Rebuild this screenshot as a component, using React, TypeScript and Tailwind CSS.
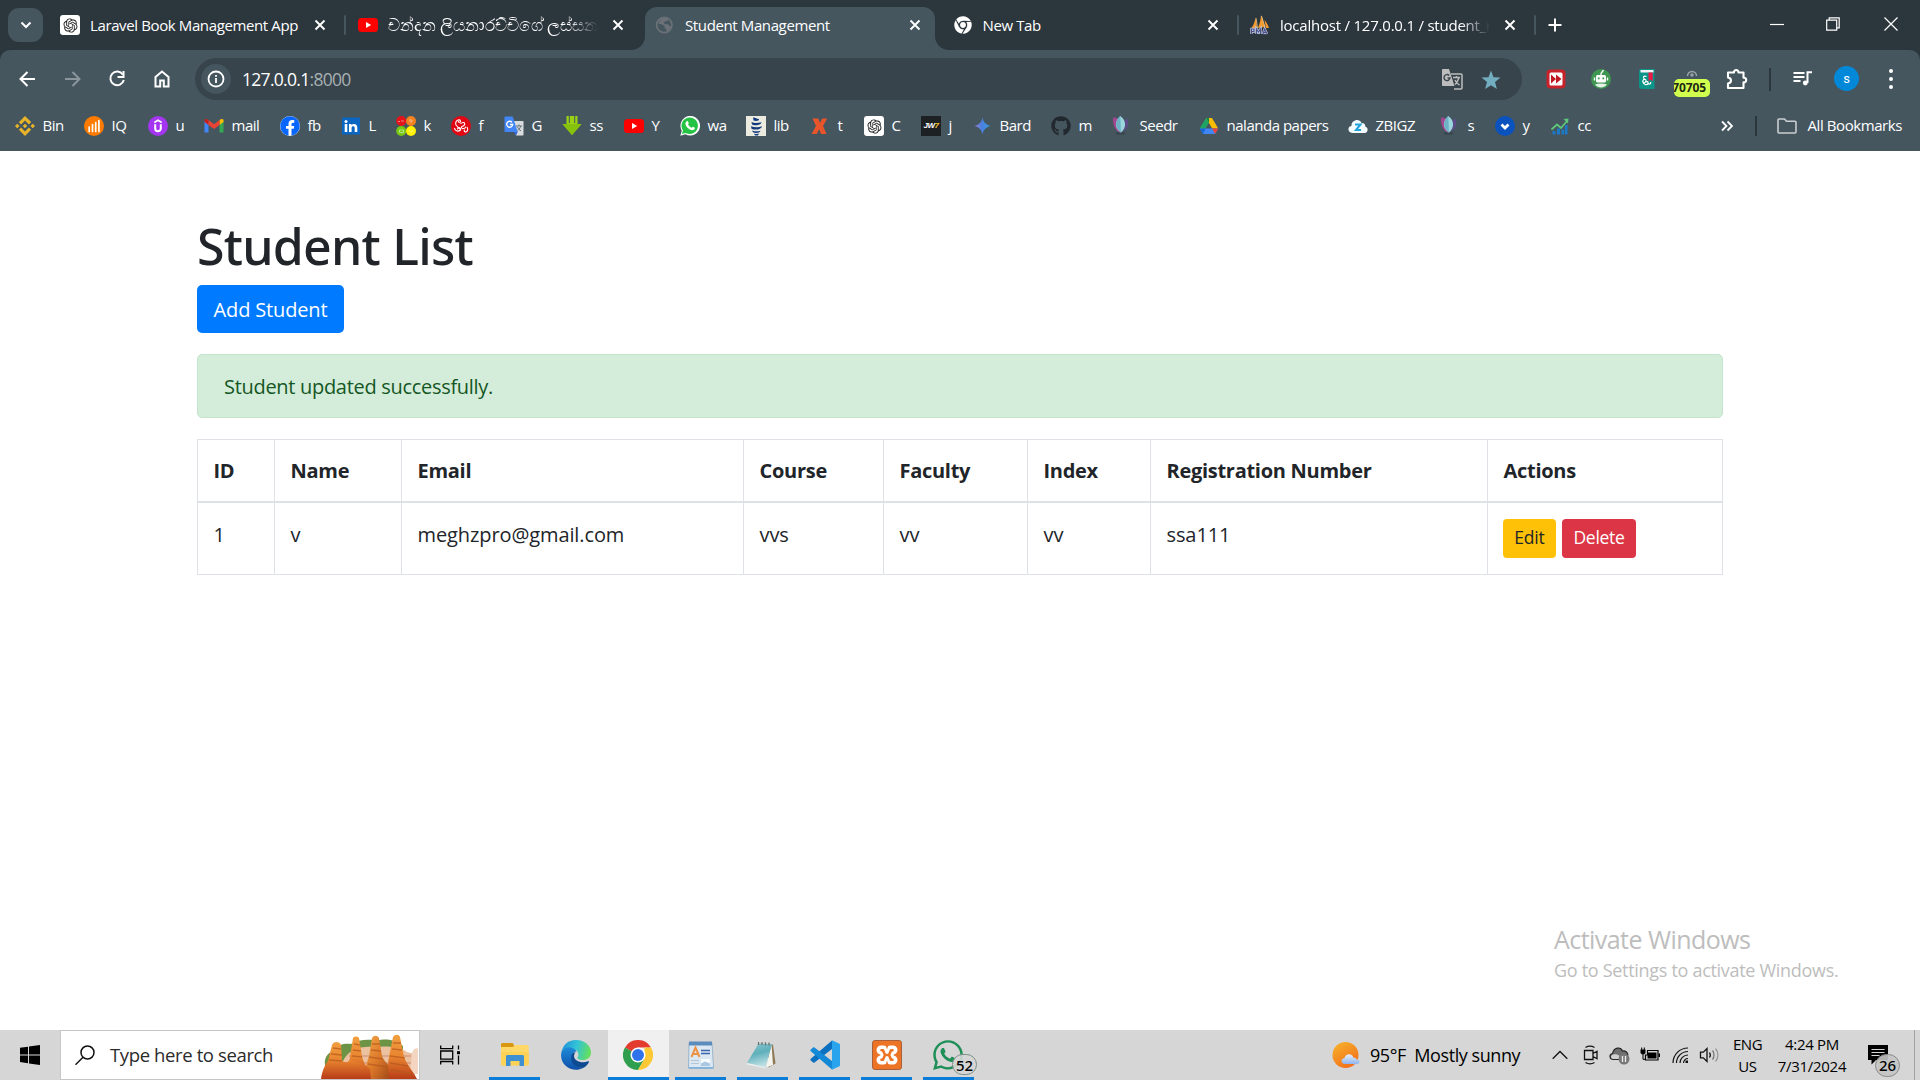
import React from "react";
import { FaGithub, FaWhatsapp, FaFacebook, FaChrome } from "react-icons/fa";
import { RiOpenaiFill } from "react-icons/ri";
import { SiBinance } from "react-icons/si";

/* ---------- small drawings ---------- */

const Close = () => (
  <svg viewBox="0 0 12 12" className="size-3 shrink-0 stroke-white" fill="none" strokeWidth="1.9">
    <path d="M1.5 1.5l9 9M10.5 1.5l-9 9" />
  </svg>
);

const OpenAi = () => (
  <span className="flex size-5 shrink-0 items-center justify-center rounded-[3px] bg-white text-[#222]">
    <RiOpenaiFill size={17} />
  </span>
);

const YouTube = () => (
  <svg viewBox="0 0 20 20" className="size-5 shrink-0">
    <rect x="0" y="3" width="20" height="14" rx="3.5" fill="#f00" />
    <path d="M8 7l5.2 3L8 13z" fill="#fff" />
  </svg>
);

const Globe = () => (
  <svg viewBox="0 0 20 20" className="size-5 shrink-0">
    <circle cx="9.3" cy="10" r="7.7" fill="none" stroke="#6b7176" strokeWidth="1.7" />
    <path d="M9 2.500c2 0 4 .8 4.600 2l-1.500 1.500-2 .3-1.200 1.700 1 1.200h3.200l1.300 1.600 1.800.2c-.5 3-2.500 5-4.700 6l.1-2.500-2-1.600V11L6.500 9.200 3.500 8.700C4 5 6 3 9 2.500z" fill="#6b7176" />
  </svg>
);

const Sails = () => (
  <svg viewBox="0 0 20 20" className="size-5 shrink-0">
    <path d="M1.500 13C4 9 5 6 5.500 2.500L7 13zM8 13C10 8 10.800 4 11 0l4 12zM14.500 5c2 2 3.500 5 4.500 8h-3z" fill="#f29a2e" />
    <path d="M6 3l1.500 10M11.500 1l3.500 11" stroke="#ffd08a" strokeWidth=".8" />
    <path d="M1.500 19v-5h2.500v2.500H1.500M6.500 19v-5l2 3 2-3v5M13 19l1.700-5L17 19M13.500 17.500h3" stroke="#c3cbe6" strokeWidth="2.400" fill="none" />
    <path d="M1.500 19v-5h2.500v2.500H1.500M6.500 19v-5l2 3 2-3v5M13 19l1.700-5L17 19M13.500 17.500h3" stroke="#4a5187" strokeWidth="1.100" fill="none" />
  </svg>
);

const Seedr = () => (
  <svg viewBox="0 0 20 20" className="size-5 shrink-0">
    <ellipse cx="8.500" cy="17.300" rx="5" ry="1.500" fill="#394750" />
    <path d="M1 1.500C5 1 9 4 9 9v8C2.500 15 .5 8 1 1.500z" fill="#a0478f" />
    <path d="M15.500 2.500c2 6 0 12-7 13.500V7z" fill="#5c4a86" />
    <path d="M8.300 0c5.700 4 6.700 11 .7 16.500C2 12 2.500 5 8.300 0z" fill="#9ad6dc" />
    <path d="M8.300 0c-5.500 5-6 12 .7 16.500z" fill="#6fb2c5" />
  </svg>
);

const Udemy = () => (
  <svg viewBox="0 0 20 20" className="size-5 shrink-0">
    <circle cx="10" cy="10" r="10" fill="#a435f0" />
    <path d="M6.300 6.500L10 4.300l3.700 2.200" stroke="#fff" strokeWidth="1.600" fill="none" />
    <path d="M7.200 8.300v4.200c0 3.700 5.600 3.700 5.600 0V8.300" stroke="#fff" strokeWidth="2" fill="none" />
  </svg>
);

const Gmail = () => (
  <svg viewBox="0 0 20 20" className="size-5 shrink-0">
    <path d="M.5 4.500v12h4V8z" fill="#4285f4" />
    <path d="M19.500 4.500v12h-4V8z" fill="#34a853" />
    <path d="M15.500 4v5l4-3V4.500c0-1.800-2.200-2-4-.5z" fill="#fbbc04" />
    <path d="M.5 6l4 3V4C2.700 2.500.5 2.700.5 4.500z" fill="#c5221f" />
    <path d="M4.500 4v5L10 13l5.500-4V4L10 8.200z" fill="#ea4335" />
  </svg>
);

const LinkedIn = () => (
  <svg viewBox="0 0 20 20" className="size-5 shrink-0">
    <rect x="1" y="1.500" width="18" height="17" rx="1.200" fill="#0a66c2" />
    <circle cx="5" cy="5.500" r="1.500" fill="#fff" />
    <path d="M3.700 8h2.600v8H3.700zM8 8h2.500v1.200c1.200-2 5.800-2 5.800 2.200V16h-2.600v-4c0-2.500-3.100-2.300-3.100 0v4H8z" fill="#fff" />
  </svg>
);

const FourDots = () => (
  <svg viewBox="0 0 20 20" className="size-5 shrink-0">
    <circle cx="5.200" cy="5" r="5" fill="#e5141a" />
    <circle cx="15" cy="5" r="5" fill="#f58220" />
    <circle cx="5.200" cy="15" r="5" fill="#76c810" />
    <circle cx="15" cy="15" r="5" fill="#fff200" />
    <path d="M2 5.500h2M5 5h3M13 4.500c1-1 3-1 3 .5s-2 1.500-2 .3M3.500 14h4v2.500h-4zM13 14c2 3 4 2 4 0" stroke="#fff" strokeOpacity=".6" strokeWidth=".8" fill="none" />
  </svg>
);

const Sinhala = () => (
  <svg viewBox="0 0 20 20" className="size-5 shrink-0">
    <circle cx="10" cy="10" r="10" fill="#e30613" />
    <path d="M5 9c-1.500-5 4-6.500 4.500-4 .3 1.900-2.700 1.500-2-.2M3.500 12c.5 4 6.500 4 6 .7-.5-2.200-3.700-1.200-2.700.7M5 9l5 5.500M9.500 8c2-2.500 5-1.500 4 .7s-3.500 1.200-3 3 4 .8 4.500-1M16 11c1 1.500 1 4-.7 4.700s-2.800-1-1.600-2" stroke="#fff" strokeWidth="1.100" fill="none" />
  </svg>
);

const GTranslate = () => (
  <svg viewBox="0 0 20 20" className="size-5 shrink-0">
    <path d="M8 5h10.500c.8 0 1 .4 1 1v12.500c0 .8-.3 1-1 1H12z" fill="#d9dcdf" />
    <path d="M12 10h6M15 8.500V10M16.700 10c-.6 2.500-2 4-3.500 5M13.500 11c.7 2 2 3 3.500 3.800" stroke="#66737b" strokeWidth="1" fill="none" />
    <path d="M1.500.5h7.200l5 15.500H1.500C.8 16 .5 15.600.5 15V1.500c0-.7.3-1 1-1z" fill="#4285f4" />
    <path d="M12 19.500l1.700-3.500H10z" fill="#3367d6" />
    <path d="M8 6.300a3 3 0 1 0 .7 2.200H6" stroke="#fff" strokeWidth="1.300" fill="none" />
  </svg>
);

const GreenArrow = () => (
  <svg viewBox="0 0 20 20" className="size-5 shrink-0">
    <path d="M4.500 0h2.300v7h1V0h4.400v7h1V0h2.300v8h4L10 19 .5 8h4z" fill="#9ad315" />
    <path d="M.5 8h19L10 19z" fill="#86c10c" />
  </svg>
);

const WhatsBookmark = () => (
  <svg viewBox="0 0 20 20" className="size-5 shrink-0">
    <path d="M.3 19.700l1.500-5A9.800 9.800 0 1 1 5.500 18.300z" fill="#fff" />
    <path d="M1.900 18.100l1.100-3.700A8.200 8.200 0 1 1 5.800 16.900z" fill="#25c343" />
    <path d="M6.800 5.200c.8-.4 1.200-.1 1.900 1.900.2.500-.8 1.200-.6 1.500.9 1.600 2 2.500 3.400 3.100.5.200.9-1.200 1.400-1 2 .9 2.200 1 2 1.600-.5 2-2.700 2.400-5 1.300C7.300 12.200 5.300 9.600 5.400 7.600c.1-1 .7-2 1.400-2.400z" fill="#fff" />
  </svg>
);

const Lib = () => (
  <svg viewBox="0 0 20 20" className="size-5 shrink-0">
    <rect width="20" height="20" fill="#ecebdf" />
    <path d="M7 1.500c2.500-.5 3 1.500 6 1.500.5 2-3 2.500-5.500 1.500zM5.500 6c3 1.500 6 1 10 .2-.5 3.300-7 3.600-9.500 2.300zM5 10.200c4 1.500 8 1.300 11 0-.5 3.800-8 4-10.500 2.500zM6 14.500c3 1.200 6 1 8.500.3-.5 2.500-5.500 2.700-7.500 1.500zM8 17.500c2 .8 4 .5 5 0l-1 2H9z" fill="#123a80" />
  </svg>
);

const RedX = () => (
  <svg viewBox="0 0 20 20" className="size-5 shrink-0">
    <path d="M2.500 2.500h5.800l1.700 4.500 2.200-4.500h5L13 10l3.500 8h-5.500l-1.700-4.700L6.700 18H1.500L6 10z" fill="#e8552b" />
  </svg>
);

const Jw = () => (
  <span className="flex size-5 shrink-0 items-center justify-center bg-[#1e2124] font-['Liberation_Sans'] text-[8px] font-bold italic tracking-[-0.5px] text-white">
    JW<span className="text-[#f3c326]">7</span>
  </span>
);

const Spark = () => (
  <svg viewBox="0 0 20 20" className="size-5 shrink-0">
    <defs>
      <linearGradient id="spark" x1="0" x2="1">
        <stop offset="0" stopColor="#9a7fd0" />
        <stop offset=".45" stopColor="#4a7fe0" />
        <stop offset="1" stopColor="#3a9fe0" />
      </linearGradient>
    </defs>
    <path d="M10.500 1.500c1 4.800 3.200 7.300 8 8.500-4.800 1.200-7 3.700-8 8.500-1-4.800-3.200-7.300-8-8.500 4.800-1.200 7-3.700 8-8.500z" fill="url(#spark)" />
  </svg>
);

const Drive = () => (
  <svg viewBox="0 0 20 20" className="size-5 shrink-0">
    <path d="M7 2h6l-6 9.500L4 17 .8 12z" fill="#1fa463" />
    <path d="M7 2h6l6.200 10.500h-6z" fill="#fbbc04" />
    <path d="M7 2h3l0 5.200z" fill="#0f8a4c" />
    <path d="M6.700 12.500h12.500L16 18H4L.8 12.500z" fill="#4285f4" />
    <path d="M.8 12.500h6L4 18z" fill="#1967d2" />
    <path d="M13.200 12.500h6L16 18z" fill="#ea4335" />
  </svg>
);

const Zbigz = () => (
  <svg viewBox="0 0 20 20" className="size-5 shrink-0">
    <path d="M4.500 17C-1 17-.5 10 3.500 10 3 4.500 11 1.500 13.500 7c3-.3 4 1.800 3.700 3.500C20.500 11 20.500 17 16.500 17z" fill="#f4fbff" />
    <path d="M7 8.500h5.500L8 14h5" stroke="#23a3dd" strokeWidth="2" fill="none" />
  </svg>
);

const BlueY = () => (
  <svg viewBox="0 0 20 20" className="size-5 shrink-0">
    <circle cx="10" cy="10" r="10" fill="#0a52bd" />
    <path d="M6.500 8.500L10 12l3.500-3.500" stroke="#fff" strokeWidth="2.800" fill="none" />
  </svg>
);

const ChartUp = () => (
  <svg viewBox="0 0 20 20" className="size-5 shrink-0">
    <path d="M2.500 15h3v3.500h-3zM7 12.500h3v6H7zM11.500 13.500h2.800v5h-2.800zM15 9h2.500v9.500H15z" fill="#1e78c8" />
    <path d="M1.500 13.500l5.500-5 4 3.500 6-7" stroke="#5fc77c" strokeWidth="1.700" fill="none" />
    <path d="M13.500 3l5-.5-.5 5z" fill="#5fc77c" />
  </svg>
);

const Iq = () => (
  <svg viewBox="0 0 20 20" className="size-5 shrink-0">
    <circle cx="10" cy="10" r="10" fill="#ff7a00" />
    <path d="M5.200 11v4.500M8.500 8.500v7M11.700 6.500v9M14.900 4.500v11" stroke="#fff" strokeWidth="1.700" strokeLinecap="round" />
  </svg>
);

/* ---------- tab strip ---------- */

type TabProps = { icon: React.ReactNode; title: string; active?: boolean; fade?: boolean; sep?: boolean; font?: string };

function Tab({ icon, title, active, fade, sep, font = "text-[15px] tracking-[-0.38px]" }: TabProps) {
  return (
    <div className="relative flex h-[43px] w-[297.5px] shrink-0">
      <div className={"flex h-full w-[290px] items-center rounded-t-[12px] pb-[7px] pl-[10px] " + (active ? "bg-[#45565f]" : "")}>
        {icon}
        <span className={"ml-[10px] w-[210px] overflow-hidden whitespace-nowrap leading-[26px] text-white " + font + (fade ? " [mask-image:linear-gradient(to_right,#000_86%,transparent)]" : "")}>
          {title}
        </span>
        <span className="ml-[14px] flex">
          <Close />
        </span>
      </div>
      {sep && <span className="ml-[4px] mt-2 h-5 w-[2px] rounded bg-[#45565f]" />}
      {active && (
        <>
          <span className="absolute -left-[14px] bottom-0 size-[14px] bg-[#45565f]">
            <span className="block size-full rounded-br-[14px] bg-[#2c363d]" />
          </span>
          <span className="absolute bottom-0 left-[290px] size-[14px] bg-[#45565f]">
            <span className="block size-full rounded-bl-[14px] bg-[#2c363d]" />
          </span>
        </>
      )}
    </div>
  );
}

function TabStrip() {
  return (
    <div className="flex h-[50px] bg-[#2c363d] pl-2 pt-[7px]">
      <div className="mr-[7px] mt-px flex h-[34px] w-[35px] items-center justify-center rounded-[11px] bg-[#45565f]">
        <svg viewBox="0 0 12 12" className="size-3" fill="none" stroke="#fff" strokeWidth="2">
          <path d="M1.500 3.500L6 8l4.500-4.500" />
        </svg>
      </div>
      <Tab icon={<OpenAi />} title="Laravel Book Management App" sep />
      <Tab icon={<YouTube />} title="චන්දන ලියනාරච්චිගේ ලස්සන" fade font="text-[17.2px]" />
      <Tab icon={<Globe />} title="Student Management" active />
      <Tab icon={<span className="flex size-5 shrink-0 items-center justify-center text-white"><FaChrome size={18} /></span>} title="New Tab" sep />
      <Tab icon={<Sails />} title="localhost / 127.0.0.1 / student_m" fade sep font="text-[15px] tracking-[-0.22px]" />
      <svg viewBox="0 0 14 14" className="ml-[10px] mt-[11px] size-[14px]" stroke="#fff" strokeWidth="2">
        <path d="M7 .5v13M.5 7h13" />
      </svg>
      <div className="ml-auto flex h-[34px] items-center pr-[22px]">
        <svg viewBox="0 0 14 14" className="mr-[42px] size-[14px]" stroke="#fff" strokeWidth="1.200">
          <path d="M0 7.500h14" />
        </svg>
        <svg viewBox="0 0 14 14" className="mr-[44px] size-[14px]" fill="none" stroke="#fff" strokeWidth="1.200">
          <path d="M.7 3.200h10v10h-10zM3.200 3V.8h10v10H11" />
        </svg>
        <svg viewBox="0 0 14 14" className="size-[14px]" stroke="#fff" strokeWidth="1.200">
          <path d="M.5.5l13 13M13.500.5l-13 13" />
        </svg>
      </div>
    </div>
  );
}

/* ---------- toolbar ---------- */

const navIcon = "size-5 shrink-0";

function Toolbar() {
  return (
    <div className="flex h-[58px] items-center pl-[17px]">
      <svg viewBox="0 0 20 20" className={navIcon} fill="none" stroke="#fff" strokeWidth="2">
        <path d="M18 10H4M10.500 3L3.500 10l7 7" />
      </svg>
      <svg viewBox="0 0 20 20" className={"ml-[26px] " + navIcon} fill="none" stroke="#8b969c" strokeWidth="2">
        <path d="M2 10h14M9.500 3l7 7-7 7" />
      </svg>
      <svg viewBox="0 0 20 20" className={"ml-[24px] " + navIcon} fill="none" stroke="#fff" strokeWidth="2">
        <path d="M15.800 5.500A6.800 6.800 0 1 0 16.800 11" />
        <path d="M16.500 2v6h-6" />
      </svg>
      <svg viewBox="0 0 20 20" className={"ml-[25px] " + navIcon} fill="none" stroke="#fff" strokeWidth="2">
        <path d="M3.500 17.500V8L10 2.500 16.500 8v9.500h-4.700v-6H8.200v6z" />
      </svg>
      <div className="ml-[23px] flex h-[42px] w-[1327px] shrink-0 items-center rounded-full bg-[#38444b] pl-[6px] pr-[20px]">
        <div className="flex size-[30px] items-center justify-center rounded-full bg-[#45565f]">
          <svg viewBox="0 0 18 18" className="size-[18px]" fill="none" stroke="#fff" strokeWidth="1.800">
            <circle cx="9" cy="9" r="7.500" />
            <path d="M9 8v5M9 5v1.800" />
          </svg>
        </div>
        <span className="ml-[11px] text-[17.5px] tracking-[-0.7px] text-white">
          127.0.0.1<span className="text-[#a7b0b4]">:8000</span>
        </span>
        <svg viewBox="0 0 22 22" className="ml-auto size-[22px]" fill="none">
          <path d="M10 6h10c.8 0 1 .4 1 1v13c0 .8-.3 1-1 1h-7" stroke="#bdbdbd" strokeWidth="1.500" />
          <path d="M2 1h6l5.500 17H2c-.8 0-1-.4-1-1V2c0-.7.3-1 1-1z" fill="#bdbdbd" />
          <path d="M12 9.500h7M15.500 8v1.500M18 9.500c-1 3.500-2.500 5.500-4 7M14 12c1 2.500 2.500 4 4.500 5" stroke="#bdbdbd" strokeWidth="1.400" />
          <path d="M8.200 7.500a3 3 0 1 0 .8 2.500H6.500" stroke="#38444b" strokeWidth="1.400" />
        </svg>
        <svg viewBox="0 0 20 20" className="ml-[18px] mr-px mt-[2px] size-5">
          <path d="M10 .5l2.500 6.800 7 .3-5.500 4.500 1.900 7L10 15.200l-5.900 3.900 1.900-7L.5 7.600l7-.3z" fill="#73aec0" />
        </svg>
      </div>
      <svg viewBox="0 0 20 20" className="ml-[24px] size-5 shrink-0">
        <rect x=".5" y=".5" width="19" height="19" rx="4" fill="#c8232a" />
        <rect x="3.500" y="3.500" width="13" height="13" rx="1.500" fill="#fff" />
        <path d="M5 5.500l5 4.500-5 4.500zM10 5.500l5.500 4.500-5.500 4.500z" fill="#c01820" />
      </svg>
      <svg viewBox="0 0 20 20" className="ml-[25px] size-5 shrink-0">
        <circle cx="10" cy="10" r="10" fill="#3f9650" />
        <path d="M10 7V4.500L12.500 1" stroke="#fff" strokeWidth="1.300" fill="none" />
        <rect x="5" y="6" width="10" height="7.500" rx="1.500" fill="#fff" />
        <path d="M3.500 8.500v3M16.500 8.500v3" stroke="#fff" strokeWidth="1.400" />
        <path d="M4 15.500c4-1.500 8-1.500 12 0-3 4-9 4-12 0z" fill="#e4f3e6" />
        <rect x="6.800" y="8.500" width="1.800" height="1.800" fill="#3f9650" />
        <rect x="11.400" y="8.500" width="1.800" height="1.800" fill="#3f9650" />
      </svg>
      <svg viewBox="0 0 20 20" className="ml-[26px] size-5 shrink-0">
        <path d="M3 0h14.500v20H5a3 3 0 0 1-3-3V2z" fill="#0b9488" />
        <path d="M3.500 1h13v2.500h-13z" fill="#f3f3f3" />
        <path d="M11.500 3.500h4.200v9l-2.100-2-2.100 2z" fill="#f01846" />
        <path d="M9.500 7.500c-3-1.500-4 1.500-2 2.300M6 13c-1-3 3-3.500 3-1.500s-2.500 3.500-3 1.500c.5 3 4.500 3.500 5 1.500s-1-2.500-1.500-1.300M11 14c.5 2 3.500 1 2.500-1" stroke="#fff" strokeWidth="1.200" fill="none" />
      </svg>
      <div className="relative ml-[17px] h-[36px] w-9 shrink-0">
        <svg viewBox="0 0 20 20" className="absolute left-[8px] top-[7px] size-5" fill="none" stroke="#9ba4a8" strokeWidth="1.500">
          <path d="M5.500 8a4.500 4.500 0 0 1 9 0" />
          <circle cx="10" cy="7" r="1" />
        </svg>
        <span className="absolute left-0 top-[18px] flex h-[18px] w-9 items-center justify-end overflow-hidden rounded-[5px] bg-[#d2ff4d] pr-[4px] font-['Noto_Sans'] text-[12px] font-bold leading-[18px] tracking-[-0.1px] text-[#1d2612]">
          70705
        </span>
      </div>
      <svg viewBox="0 0 22 22" className="ml-[16px] size-[22px] shrink-0" fill="none" stroke="#fff" strokeWidth="2.100">
        <path d="M2 4.500h6c-.6-3.300 5-3.300 4.400 0H17.500v5.300c3.600-.6 3.600 5.200 0 4.600V20H2v-4.500c4-.6 4-5.400 0-6z" strokeLinejoin="round" />
      </svg>
      <span className="ml-[21px] h-[23px] w-[2px] shrink-0 bg-[#2c363d]" />
      <svg viewBox="0 0 22 20" className="ml-[21px] h-5 w-[22px] shrink-0" fill="none" stroke="#fff" strokeWidth="2">
        <path d="M1.500 4h11M1.500 8h11M1.500 12h7M15.500 14V3.200H20" />
        <circle cx="13.300" cy="14" r="2.400" fill="#fff" stroke="none" />
      </svg>
      <span className="-mt-px ml-[20px] flex size-[25px] shrink-0 items-center justify-center rounded-full bg-[#0288d8] font-['Roboto'] text-[13px] leading-5 text-white">s</span>
      <span className="ml-[30px] flex w-[4px] shrink-0 flex-col gap-[4px]">
        <span className="size-[4px] rounded-full bg-white" />
        <span className="size-[4px] rounded-full bg-white" />
        <span className="size-[4px] rounded-full bg-white" />
      </span>
    </div>
  );
}

/* ---------- bookmarks ---------- */

const bookmarks: { icon: React.ReactNode; label: string; w: string }[] = [
  { icon: <SiBinance size={20} color="#e9b429" />, label: "Bin", w: "w-[69px]" },
  { icon: <Iq />, label: "IQ", w: "w-[64px]" },
  { icon: <Udemy />, label: "u", w: "w-[56px]" },
  { icon: <Gmail />, label: "mail", w: "w-[76px]" },
  { icon: <span className="flex size-5 items-center justify-center rounded-full bg-white text-[#0866ff]"><FaFacebook size={20} /></span>, label: "fb", w: "w-[61px]" },
  { icon: <LinkedIn />, label: "L", w: "w-[55px]" },
  { icon: <FourDots />, label: "k", w: "w-[55px]" },
  { icon: <Sinhala />, label: "f", w: "w-[53px]" },
  { icon: <GTranslate />, label: "G", w: "w-[58px]" },
  { icon: <GreenArrow />, label: "ss", w: "w-[62px]" },
  { icon: <YouTube />, label: "Y", w: "w-[56px]" },
  { icon: <WhatsBookmark />, label: "wa", w: "w-[66px]" },
  { icon: <Lib />, label: "lib", w: "w-[64px]" },
  { icon: <RedX />, label: "t", w: "w-[54px]" },
  { icon: <OpenAi />, label: "C", w: "w-[57px]" },
  { icon: <Jw />, label: "j", w: "w-[51px]" },
  { icon: <Spark />, label: "Bard", w: "w-[79px]" },
  { icon: <FaGithub size={20} color="#22292e" />, label: "m", w: "w-[61px]" },
  { icon: <Seedr />, label: "Seedr", w: "w-[87px]" },
  { icon: <Drive />, label: "nalanda papers", w: "w-[149px]" },
  { icon: <Zbigz />, label: "ZBIGZ", w: "w-[92px]" },
  { icon: <Seedr />, label: "s", w: "w-[55px]" },
  { icon: <BlueY />, label: "y", w: "w-[55px]" },
  { icon: <ChartUp />, label: "cc", w: "w-[60px]" },
];

function BookmarkBar() {
  return (
    <div className="flex h-[43px] items-center pb-[7px] pl-[15px] pr-[18px] text-[15px] leading-5 tracking-[-0.48px] text-white">
      {bookmarks.map((b) => (
        <div key={b.label + b.w} className={"flex shrink-0 items-center gap-[7.5px] whitespace-nowrap " + b.w}>
          <span className="flex size-5 shrink-0">{b.icon}</span>
          <span className="-mt-[2px]">{b.label}</span>
        </div>
      ))}
      <svg viewBox="0 0 12 12" className="ml-auto size-3" fill="none" stroke="#fff" strokeWidth="1.800">
        <path d="M1 1.500L5.500 6 1 10.500M6.500 1.500L11 6l-4.500 4.500" />
      </svg>
      <span className="ml-[22px] h-5 w-[2px] bg-[#2c363d]" />
      <svg viewBox="0 0 20 16" className="ml-[20px] h-4 w-5" fill="none" stroke="#c9ced1" strokeWidth="1.600" strokeLinejoin="round">
        <path d="M1 14V2c0-.6.4-1 1-1h5.500l2 2.300H18c.6 0 1 .4 1 1V14c0 .6-.4 1-1 1H2c-.6 0-1-.4-1-1z" />
      </svg>
      <span className="-mt-[2px] ml-[11px] whitespace-nowrap tracking-[-0.42px]">All Bookmarks</span>
    </div>
  );
}

/* ---------- page ---------- */

const columns: { name: string; value: string; w: string }[] = [
  { name: "ID", value: "1", w: "w-[77px]" },
  { name: "Name", value: "v", w: "w-[127px]" },
  { name: "Email", value: "meghzpro@gmail.com", w: "w-[342px]" },
  { name: "Course", value: "vvs", w: "w-[140px]" },
  { name: "Faculty", value: "vv", w: "w-[144px]" },
  { name: "Index", value: "vv", w: "w-[123px]" },
  { name: "Registration Number", value: "ssa111", w: "w-[337px]" },
];

function Page() {
  return (
    <main className="relative h-[879px] bg-white pl-[197px] pt-[65px] text-[20px] leading-[30px] text-[#212529]">
      <h1 className="h-[69px] font-['Noto_Sans'] text-[50px] font-medium leading-[60px] tracking-[-0.75px]">Student List</h1>
      <button className="block h-[48px] w-[147px] rounded-[5px] bg-[#007bff] pt-px text-center tracking-[-0.15px] text-white">Add Student</button>
      <div className="mt-[21px] flex h-[64px] w-[1526px] items-center rounded-[5px] border border-[#c3e6cb] bg-[#d4edda] pl-[26px] pt-px tracking-[-0.3px] text-[#155724]">
        Student updated successfully.
      </div>
      <table className="mt-[21px] w-[1526px] table-fixed border-separate border-spacing-0 border-r border-[#dee2e6] text-left">
        <thead>
          <tr className="h-[64px]">
            {columns.map((c) => (
              <th key={c.name} className={"border-b-2 border-l border-t border-[#dee2e6] pl-[15.5px] align-middle font-bold tracking-[-0.28px] " + c.w}>
                {c.name}
              </th>
            ))}
            <th className="border-b-2 border-l border-t border-[#dee2e6] pl-[15.5px] align-middle font-bold tracking-[-0.28px]">Actions</th>
          </tr>
        </thead>
        <tbody>
          <tr className="h-[72px]">
            {columns.map((c) => (
              <td key={c.name} className="border-b border-l border-[#dee2e6] pl-[15.5px] pt-[17px] align-top tracking-[-0.1px]">
                {c.value}
              </td>
            ))}
            <td className="border-b border-l border-[#dee2e6] pl-[15px] pt-[16px] align-top">
              <div className="flex gap-[6px] text-[17.5px] leading-[37px]">
                <button className="h-[39px] w-[53px] rounded-[4px] bg-[#ffc107] pb-[2px] tracking-[-0.2px]">Edit</button>
                <button className="h-[39px] w-[74px] rounded-[4px] bg-[#dc3545] pb-[2px] tracking-[-0.3px] text-white">Delete</button>
              </div>
            </td>
          </tr>
        </tbody>
      </table>
      <div className="absolute left-[1554px] top-[771px] whitespace-nowrap text-[#bdbdbd]">
        <p className="text-[25px] leading-[35px] tracking-[-0.55px]">Activate Windows</p>
        <p className="text-[18px] leading-[26px] tracking-[-0.3px]">Go to Settings to activate Windows.</p>
      </div>
    </main>
  );
}

/* ---------- taskbar ---------- */

const Rocks = () => (
  <svg viewBox="0 0 100 48" className="h-12 w-[100px] shrink-0">
    <defs>
      <linearGradient id="rockA" x1="0" y1="0" x2="0" y2="1">
        <stop offset="0" stopColor="#f2a040" />
        <stop offset=".5" stopColor="#e8842f" />
        <stop offset="1" stopColor="#b83c18" />
      </linearGradient>
      <linearGradient id="rockB" x1="0" y1="0" x2="1" y2="1">
        <stop offset="0" stopColor="#f3a848" />
        <stop offset=".5" stopColor="#dd7a2a" />
        <stop offset="1" stopColor="#9c4416" />
      </linearGradient>
    </defs>
    <path d="M6 34c-1-6 2-12 8-14 6-7 12-8 18-7 8-5 20-5 26-3 8-3 20-1 26 5v30H6z" fill="#6d9345" />
    <path d="M24 30c6-12 18-15 30-14 12-1 26-1 34 5l8 2v22H10z" fill="#ecc1a0" />
    <path d="M22 32h76M30 25h62" stroke="#dba58a" strokeWidth="2" />
    <path d="M93 22l2-4 4-1v26h-8z" fill="#f4d5c2" />
    <path d="M26 48c2-8 4-14 5-22l3-19c1-2 5-2 6 0l3 18c2 10 8 14 9 23z" fill="url(#rockA)" />
    <path d="M46 48c-1-10 2-16 4-23l3-18c2-3 5-3 7 0l3 18c2 6 7 8 8 12l2 11z" fill="url(#rockB)" />
    <path d="M70 48c0-8-2-14 0-22l4-20c2-3 6-3 7 0l4 20c3 8 9 14 13 22z" fill="url(#rockA)" />
    <path d="M2 48c1-8 4-14 7-18l4-16c1-4 8-4 9 0l1 15c2 3 5 3 8 0 6 2 16 4 20 9l1 10z" fill="url(#rockA)" />
    <path d="M14 17l8 1M12 23l11 1M10 29l13 1M35 13l6 1M34 19l8 1M33 25l10 1M53 13l8 0M52 19l10 1M50 26l14 2M49 33l20 3M74 12l8 0M73 18l10 1M71 25l15 2M71 32l18 3M72 39l22 4" stroke="#b5581d" strokeWidth="1.300" opacity=".7" />
  </svg>
);

const Explorer = () => (
  <svg viewBox="0 0 30 30" className="size-[30px]">
    <path d="M1 4.500c0-1 .5-1.500 1.500-1.500h10L14 5v4H1z" fill="#d9980f" />
    <path d="M1 7h12l2-2h12.500c.8 0 1.200.5 1.200 1.200V24c0 1-.5 1.500-1.500 1.500h-25C1.500 25.500 1 25 1 24z" fill="#ffd869" />
    <path d="M1 12h28v12c0 1-.7 1.500-1.500 1.500h-25C1.500 25.500 1 25 1 24z" fill="#fdcf50" opacity=".7" />
    <path d="M6 26v-9.500c0-.8.5-1.500 1.500-1.500h15c1 0 1.500.7 1.500 1.500V26h-4.500v-5h-9v5z" fill="#3f8fd3" />
  </svg>
);

const Edge = () => (
  <svg viewBox="0 0 30 30" className="size-[30px]">
    <defs>
      <linearGradient id="edgeTop" x1="0" y1=".3" x2="1" y2=".5">
        <stop offset="0" stopColor="#1f8fd6" />
        <stop offset=".5" stopColor="#33c3d8" />
        <stop offset="1" stopColor="#66e05a" />
      </linearGradient>
      <linearGradient id="edgeLow" x1="0" y1="0" x2="0" y2="1">
        <stop offset="0" stopColor="#1c8ad8" />
        <stop offset="1" stopColor="#0f4fa8" />
      </linearGradient>
    </defs>
    <path d="M0 15C1 5 7 0 15 0c9 0 15 6 15 12.500 0 5-4 7.500-8 7.500-4 0-6-1.200-5.500-2.500 1.500-2 1.500-6-2.500-8C9 7.500 2 9 0 15z" fill="url(#edgeTop)" />
    <path d="M0 15c1-6 6-8.500 11-7 2 .6 4 1.700 4.500 3.500-5 .5-5.500 6-3.500 10s6 6.500 10 6.500C13 33 0 27 0 15z" fill="url(#edgeLow)" />
    <path d="M11 14c-3 7 2 14 11 14 2.500-1.200 5-3.500 6-6 .2-.8-.4-1-1-.7-6 2.700-14-.3-14-5.300 0-1 .5-2.500 1.500-3.500-1.500-.3-2.800.3-3.500 1.500z" fill="#0d4a92" />
  </svg>
);

const Chrome = () => (
  <svg viewBox="0 0 30 30" className="mr-[2px] size-[30px]">
    <path d="M15 15L2 7.500A15 15 0 0 1 28 7.500H15z" fill="#e33b2e" />
    <path d="M2 7.500A15 15 0 0 0 15 30l6.500-11.300L15 15z" fill="#2f9e4f" />
    <path d="M28 7.500A15 15 0 0 1 15 30l6.500-11.300V7.500z" fill="#fcc934" />
    <circle cx="15" cy="15" r="7.500" fill="#fff" />
    <circle cx="15" cy="15" r="6" fill="#2f72ea" />
  </svg>
);

const WordPad = () => (
  <svg viewBox="0 0 30 30" className="size-[30px]">
    <path d="M3 3h23l1.500 24c.2 1-.4 1.500-1.200 1.500H3.700c-1 0-1.400-.6-1.200-1.500z" fill="#dbe8f3" stroke="#8aa9c4" strokeWidth=".8" />
    <path d="M3 1.500h23v4H3z" fill="#5a8dbd" />
    <path d="M15 10.500h9M15 13.500h9" stroke="#3c65ad" strokeWidth="1.600" />
    <path d="M5 20.500h8M5 23.500h8" stroke="#b4c5d6" strokeWidth="1" />
    <path d="M15 19h9v7h-9z" fill="#f8fbfd" />
    <path d="M15 23.500l4-2 5 2V26h-9z" fill="#a9c7e0" />
    <path d="M5.500 17l4-9.500L13.500 17M7 14h5" stroke="#ee9243" strokeWidth="2" fill="none" />
    <path d="M2.500 27h25v1.500h-25z" fill="#7fb2dd" />
  </svg>
);

const Notepad = () => (
  <svg viewBox="0 0 30 30" className="mr-[3px] size-[30px]">
    <defs>
      <linearGradient id="note" x1="0" y1="0" x2=".3" y2="1">
        <stop offset="0" stopColor="#8cc6cd" />
        <stop offset=".5" stopColor="#5fb0bb" />
        <stop offset="1" stopColor="#b9dde2" />
      </linearGradient>
    </defs>
    <path d="M27 4.500l2.500 19-7 4-1-22z" fill="#8d7a55" />
    <path d="M25.500 4l1.500 21-7 2.500z" fill="#f4f4ee" />
    <path d="M12.500 3.500L26 4 19.500 27 1 23z" fill="url(#note)" />
    <path d="M1 23l18.500 4-.5 1.300L.7 24.500z" fill="#e7eeee" />
    <path d="M12.500 2v3M16 2v3M19.500 2.200v3M23 2.400v3" stroke="#6b6b6b" strokeWidth="1.200" />
  </svg>
);

const VsCode = () => (
  <svg viewBox="0 0 30 30" className="size-[30px]">
    <path d="M22 .5V9L4.500 22.500c-.5.4-1 .3-1.400 0L.8 20.500c-.6-.6-.6-1.300 0-1.800z" fill="#0b70bf" />
    <path d="M22 29.500V21L4.500 7.500c-.5-.4-1-.3-1.400 0L.8 9.500c-.6.6-.6 1.300 0 1.800z" fill="#1489d8" />
    <path d="M22 .3l7 3.200c.6.300 1 .8 1 1.500v20c0 .7-.4 1.200-1 1.500l-7 3.200z" fill="#2ba4ee" />
  </svg>
);

const Xampp = () => (
  <svg viewBox="0 0 30 30" className="size-[30px]">
    <rect x=".5" y=".5" width="29" height="29" rx="2.500" fill="#ee7425" stroke="#a8603a" />
    <g fill="none" strokeLinecap="round" strokeLinejoin="round">
      <path d="M9 10h2.500l1.500 5-1.500 5H9M21 10h-2.500L17 15l1.500 5H21M13 15h4" stroke="#fff" strokeWidth="9" />
      <path d="M9.500 10.200h1.500l2 4.800-2 4.800H9.500M20.500 10.200H19L17 15l2 4.800h1.500M13 15h4" stroke="#ee7425" strokeWidth="2.600" />
    </g>
    <path d="M13.700 5h2.600L15 9.500zM13.700 25h2.600L15 20.500z" fill="#ee7425" />
  </svg>
);

function TaskItem({ icon, bar, active, className }: { icon: React.ReactNode; bar?: boolean; active?: boolean; className: string }) {
  return (
    <div className={"relative flex h-full shrink-0 items-center justify-center " + className + (active ? " bg-[#f0f0f0]" : "")}>
      {icon}
      {bar && <span className="absolute inset-x-0 bottom-0 h-[3px] bg-[#0b7cd8]" />}
    </div>
  );
}

const badge = "absolute flex items-center justify-center rounded-full border font-['Noto_Sans'] text-[15px] font-medium leading-5 text-black ";

function Taskbar() {
  return (
    <footer className="flex h-[50px] bg-[#d6d6d6] text-black">
      <div className="flex w-[60px] items-center justify-center">
        <svg viewBox="0 0 20 20" className="size-5">
          <path d="M0 2.800L8 1.700v7.700H0zM9 1.500L20 0v9.400H9zM0 10.400h8v7.800l-8-1.100zM9 10.400h11V20L9 18.400z" />
        </svg>
      </div>
      <div className="flex w-[360px] items-center overflow-hidden border border-[#c6c6c6] bg-white pl-[14px]">
        <svg viewBox="0 0 20 20" className="size-5 shrink-0" fill="none" stroke="#111" strokeWidth="1.500">
          <circle cx="12.500" cy="7.500" r="6.500" />
          <path d="M8 12.200L.5 19.700" />
        </svg>
        <span className="ml-[15px] w-[210px] whitespace-nowrap text-[18.5px] tracking-[-0.38px] text-[#2b2b2b]">Type here to search</span>
        <Rocks />
      </div>
      <div className="flex w-[60px] items-center justify-center">
        <svg viewBox="0 0 20 20" className="size-5" fill="none" stroke="#000" strokeWidth="1.300">
          <path d="M.7.5v3.200h12V.5M.7 6h12v8.200H.7zM.7 19.500v-3h12v3M18.500.5v4M18.500 10.500v9" />
          <path d="M17 6.200h3v3h-3z" fill="#000" stroke="none" />
        </svg>
      </div>
      <TaskItem className="ml-[9px] w-[51px]" icon={<Explorer />} bar />
      <TaskItem className="ml-[10px] w-[51px]" icon={<Edge />} />
      <TaskItem className="ml-[7px] w-[61px]" icon={<Chrome />} bar active />
      <TaskItem className="ml-[6px] w-[51px]" icon={<WordPad />} bar />
      <TaskItem className="ml-[11px] w-[51px]" icon={<Notepad />} bar />
      <TaskItem className="ml-[11px] w-[51px]" icon={<VsCode />} bar />
      <TaskItem className="ml-[11px] w-[51px]" icon={<Xampp />} bar />
      <TaskItem
        className="ml-[11px] w-[51px]"
        bar
        icon={
          <>
            <FaWhatsapp size={34} color="#1d8f57" className="mr-[2px]" />
            <span className={badge + "left-[29px] top-[24px] h-[21px] w-[25px] border-[#7c8f86] bg-[#d6d6d6]/90"}>52</span>
          </>
        }
      />

      <div className="ml-auto flex w-[588px] items-center">
        <svg viewBox="0 0 28 28" className="size-7 shrink-0">
          <defs>
            <linearGradient id="sun" x1="0" y1="0" x2=".6" y2="1">
              <stop offset="0" stopColor="#f7b52c" />
              <stop offset="1" stopColor="#f2711c" />
            </linearGradient>
            <linearGradient id="cloud" x1="0" y1="0" x2="0" y2="1">
              <stop offset="0" stopColor="#e8f0fb" />
              <stop offset="1" stopColor="#8fb4ee" />
            </linearGradient>
          </defs>
          <circle cx="13.500" cy="14" r="13" fill="url(#sun)" />
          <path d="M13 23c-4.500 0-4.500-5.500-.5-6 1-5 8-5 9 0 2-.5 3 .5 3 1.500 4 0 4 4.500.5 4.500z" fill="url(#cloud)" />
        </svg>
        <span className="ml-[10px] w-[182px] whitespace-pre text-[18px] tracking-[-0.43px]">95°F  Mostly sunny</span>
        <svg viewBox="0 0 16 10" className="h-[10px] w-4 shrink-0" fill="none" stroke="#111" strokeWidth="1.300">
          <path d="M.7 8.800L8 1.500l7.300 7.300" />
        </svg>
        <svg viewBox="0 0 16 20" className="ml-[15px] h-5 w-4 shrink-0" fill="none" stroke="#111" strokeWidth="1.300">
          <path d="M2.500 2.500c3-1.800 6-1.800 9 0M2.500 17.500c3 1.800 6 1.800 9 0M1.500 5.500h8.500v9H1.500zM10 8.500l4-2.200v7.400L10 11.500" />
        </svg>
        <svg viewBox="0 0 22 20" className="ml-[10px] h-5 w-[22px] shrink-0">
          <path d="M4.500 14.500C0 14.500 0 9 3.500 8.500 5 2 11.500 1.500 13.500 6c3-.5 5 1 5.500 4l-6 4.500z" fill="#6d6d6d" stroke="#222" strokeWidth="1.100" />
          <path d="M4.500 14C1 14 1.500 9.500 4.500 9.500c4-1 6 1 8.500 4.500z" fill="#d0d0d0" />
          <circle cx="15" cy="14" r="5.500" fill="#777" />
          <path d="M13.500 11v6M16.500 11v6" stroke="#eee" strokeWidth="1.300" />
        </svg>
        <svg viewBox="0 0 20 20" className="ml-[9px] size-5 shrink-0">
          <path d="M7.500 5.500H18v9.500H5.500V10h2z" fill="none" stroke="#000" strokeWidth="1.200" />
          <path d="M7.500 7.500h9v6h-9z" />
          <path d="M18.500 8.500h1.500v3.500h-1.500zM.5 4.500h5v3.500l-1.500 1.500H2L.5 8zM1.200 2.500h1v2h-1zM3.800 2.500h1v2h-1z" />
          <path d="M3 9.500v4.800h3" fill="none" stroke="#000" />
        </svg>
        <svg viewBox="0 0 18 18" className="ml-[12px] size-[18px] shrink-0" fill="none" stroke="#111" strokeWidth="1.200">
          <path d="M1 17A15 15 0 0 1 16 2M4.500 17A11.500 11.500 0 0 1 16 5.500M8 17a8 8 0 0 1 8-8M11.500 17a4.500 4.500 0 0 1 4.500-4.500" />
          <path d="M13.500 14.500h2.500V17h-2.500z" fill="#111" stroke="none" />
        </svg>
        <svg viewBox="0 0 22 18" className="ml-[9px] h-[18px] w-[22px] shrink-0" fill="none" strokeWidth="1.300">
          <path d="M1.500 6.200h2.800L8 2.500v13l-3.700-3.700H1.500z" stroke="#111" />
          <path d="M10.500 6.500c1 1.500 1 3.500 0 5" stroke="#111" />
          <path d="M13.500 4.500c2 2.500 2 6.500 0 9" stroke="#777" />
          <path d="M16.500 2.500c3.200 3.500 3.200 9.500 0 13" stroke="#999" />
        </svg>
        <div className="ml-[11px] w-[31px] text-center text-[15px] leading-[22px] tracking-[-0.45px]">
          <p>ENG</p>
          <p>US</p>
        </div>
        <div className="-mt-px ml-[12px] w-[74px] whitespace-nowrap text-center text-[15px] leading-[22px] tracking-[-0.3px]">
          <p>4:24 PM</p>
          <p>7/31/2024</p>
        </div>
        <div className="relative -mt-px ml-[19px] size-5 shrink-0">
          <svg viewBox="0 0 20 20" className="size-5">
            <path d="M0 0h20v15H8l-4.500 4.500V15H0z" />
            <path d="M3.500 4.500h13M3.500 7.500h13M3.500 10.500h8" stroke="#d6d6d6" strokeWidth="1.200" />
          </svg>
          <span className={badge + "left-[7px] top-[9px] h-[23px] w-[25px] border-[#8a8a8a] bg-[#c4c4c4]/90"}>26</span>
        </div>
        <span className="ml-auto mr-[5px] h-full w-px bg-[#a3a3a3]" />
      </div>
    </footer>
  );
}

export default function App() {
  return (
    <div className="flex h-[1080px] w-[1920px] flex-col overflow-hidden bg-white font-['Open_Sans','Noto_Sans',sans-serif]">
      <header className="bg-[#2c363d]">
        <TabStrip />
        <div className="rounded-t-[10px] bg-[#45565f]">
          <Toolbar />
          <BookmarkBar />
        </div>
      </header>
      <Page />
      <Taskbar />
    </div>
  );
}
